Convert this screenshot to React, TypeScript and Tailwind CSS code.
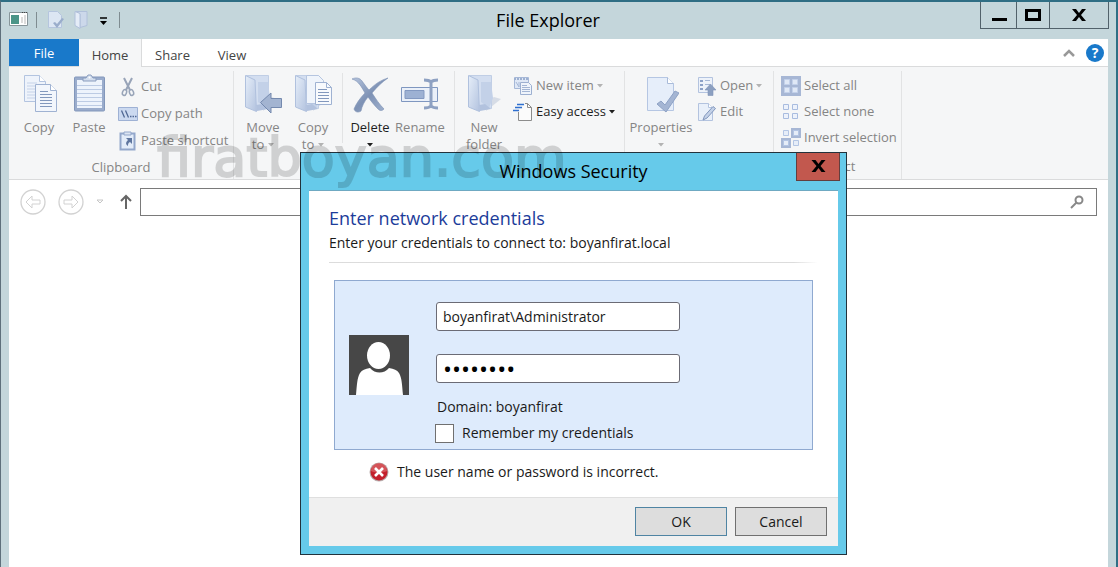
import { useState, type ReactNode } from "react";

function CopyIcon() {
  return (
    <svg width="36" height="40" viewBox="-2 0 36 40" fill="#eef3fb" stroke="#b3c4e0">
      <path d="M1.500 2.500h15l6 6v20h-21z" />
      <path d="M16.500 2.500v6h6" fill="#fff" />
      <path d="M4 10h10M4 13h8M4 16h8M4 19h8M4 22h8M4 25h8" stroke="#c5d2e8" />
      <path d="M12.500 11.500h15l6 6v21h-21z" fill="#f2f6fc" stroke="#9fb2d2" />
      <path d="M27.500 11.500v6h6" fill="#fff" stroke="#9fb2d2" />
      <path d="M17 18.500h8M17 21.500h12M17 24.500h12M17 27.500h12M17 30.500h12M17 33.500h12" stroke="#8298bd" />
    </svg>
  );
}

function PasteIcon() {
  return (
    <svg width="36" height="40" viewBox="-1 0 36 40">
      <rect x="2.500" y="4" width="30" height="34" rx="1" fill="#9aaccc" stroke="#8297bb" />
      <rect x="5" y="7" width="25" height="28" fill="#edf3fc" />
      <path d="M5 12.500h25M5 16.500h25M5 20.500h25M5 24.500h25M5 28.500h25M5 32.500h25" stroke="#bccbe4" />
      <path d="M11 8V5h3l2-3h3l2 3h3v3z" fill="#d3deee" stroke="#8a9dbe" />
      <circle cx="17.500" cy="4.500" r="1" fill="#fff" />
    </svg>
  );
}

function Folder() {
  return (
    <>
      <defs>
        <linearGradient id="folderFront" x1="0" x2="1" y1="0" y2="1">
          <stop offset="0" stopColor="#e6eef9" />
          <stop offset="1" stopColor="#b3c3df" />
        </linearGradient>
      </defs>
      <path d="M20 38l15-12-7-2-6 4z" fill="#c9d1de" opacity=".7" />
      <path d="M3 2.500h22.500v33L10 32V7z" fill="#d3def0" stroke="#c0cee5" />
      <path d="M15 9h10l2 16-4 10-8-6z" fill="#c3d1e8" />
      <path d="M2.500 2.500L12 7l1.500 31.500L2.500 34z" fill="url(#folderFront)" stroke="#b0c1de" />
      <path d="M13 32l6-1 6 5-11 2z" fill="#b2c2de" />
    </>
  );
}

function MoveToIcon() {
  return (
    <svg width="40" height="40" viewBox="0 0 40 40">
      <Folder />
      <path d="M17.500 29.500L28 20v5.500h10.500v9H28V40z" fill="#a3b4d1" stroke="#7489ae" />
    </svg>
  );
}

function CopyToIcon() {
  return (
    <svg width="40" height="40" viewBox="0 0 40 40">
      <Folder />
      <path d="M13.500 2.500h12l5 5v23h-17z" fill="#eff4fb" stroke="#b5c5e0" />
      <path d="M22.500 9.500h11l5 5v17h-16z" fill="#f8fafd" stroke="#9fb2d2" />
      <path d="M33.500 9.500v5h5" fill="none" stroke="#9fb2d2" />
      <path d="M25 16.500h9M25 19.500h11M25 22.500h11M25 25.500h11M25 28.500h11" stroke="#8298bd" />
    </svg>
  );
}

function DeleteIcon() {
  return (
    <svg width="40" height="40" viewBox="0 0 40 40">
      <defs>
        <linearGradient id="cross" x1="0" x2="1" y1="0" y2="1">
          <stop offset="0" stopColor="#b4c3dc" />
          <stop offset=".5" stopColor="#7e92b5" />
          <stop offset="1" stopColor="#a3b4d1" />
        </linearGradient>
      </defs>
      <path
        d="M2 6c4-2 8-1 10 2 3 4 5 7 7 9C25 11 31 7 38 5c-6 4-11 9-16 15 4 6 7 11 12 16-2 2-4 2-6 0-4-4-7-8-10-12-4 5-6 9-7 14-3 2-6 1-7-2 2-5 6-11 11-16C12 15 9 8 2 6z"
        fill="url(#cross)"
        stroke="#7c90b3"
        strokeWidth=".6"
      />
    </svg>
  );
}

function RenameIcon() {
  return (
    <svg width="40" height="40" viewBox="0 0 40 40" fill="none">
      <path d="M1.500 14.500h36v14h-36z" fill="#eaf0f9" stroke="#7f97c0" />
      <path d="M5 17.500h19v8H5z" fill="#9db1d3" stroke="#8399c1" />
      <path d="M24 7c4 0 6 1 7 2 1-1 3-2 7-2M24 35c4 0 6-1 7-2 1 1 3 2 7 2M31 9v24" stroke="#8ea1c2" strokeWidth="3" />
    </svg>
  );
}

function NewFolderIcon() {
  return (
    <svg width="36" height="40" viewBox="0 0 36 40">
      <Folder />
    </svg>
  );
}

function PropertiesIcon() {
  return (
    <svg width="36" height="40" viewBox="0 0 36 40">
      <path d="M4.500 4.500h20l6 6v27h-26z" fill="#e6eefa" stroke="#b5c6e3" />
      <path d="M24.500 4.500v6h6" fill="#fff" stroke="#a9bbd9" />
      <path d="M14 31l4-3 4 4 10-14 4 2-13 19z" fill="#a4b5d3" stroke="#8ea2c5" />
    </svg>
  );
}

function CutIcon() {
  return (
    <svg width="20" height="20" viewBox="0 0 20 20" fill="none" stroke="#98a4b8">
      <path d="M6 1l6 12M14 1L8 13" strokeWidth="2" />
      <ellipse cx="6.500" cy="15.500" rx="2" ry="3" strokeWidth="1.500" transform="rotate(20 6.500 15.500)" />
      <ellipse cx="13.500" cy="15.500" rx="2" ry="3" strokeWidth="1.500" transform="rotate(-20 13.500 15.500)" />
    </svg>
  );
}

function CopyPathIcon() {
  return (
    <svg width="20" height="20" viewBox="0 0 20 20">
      <path d="M.5 3.500h19v13H.5z" fill="#cbd9f0" stroke="#9eb1d4" />
      <path d="M3.500 6.500l3 7M7.500 6.500l3 7" stroke="#506894" strokeWidth="1.300" />
      <path d="M12 12.500h1.500M14.500 12.500H16M17 12.500h1.500" stroke="#506894" strokeWidth="1.500" />
    </svg>
  );
}

function PasteShortcutIcon() {
  return (
    <svg width="20" height="20" viewBox="0 0 20 20">
      <path d="M2.500 2.500h14v16h-14z" fill="#e3ecf9" stroke="#93a7cb" strokeWidth="2" />
      <path d="M6 1h7v3H6z" fill="#dbe4f2" stroke="#93a7cb" />
      <path d="M8 7h6v6l-2-2c-2 1-2 2-2 4-3-2-2-4 0-6z" fill="#5f769f" />
    </svg>
  );
}

function NewItemIcon() {
  return (
    <svg width="20" height="20" viewBox="0 0 20 20">
      <path d="M1.500 1.500h14v11h-14z" fill="#dfe8f6" stroke="#a6b8d7" />
      <path d="M1 3h14" stroke="#9db0d1" strokeWidth="2" strokeDasharray="2 1" />
      <path d="M3 6l3 5V6" fill="none" stroke="#a6b8d7" />
      <path d="M7.500 6.500h8l3 3v9h-11z" fill="#eff4fb" stroke="#9db0d1" />
      <path d="M9 9.500h5M9 11.500h8M9 13.500h8M9 15.500h8" stroke="#a3b5d4" />
    </svg>
  );
}

function EasyAccessIcon() {
  return (
    <svg width="20" height="20" viewBox="0 0 20 20">
      <path d="M5.500 1.500h9l4 4v13h-13z" fill="#fbfbfb" stroke="#8c8c8c" />
      <path d="M14.500 1.500v4h4" fill="none" stroke="#8c8c8c" />
      <path d="M3 2.500h9M1 5.500h9M0 8.500h7" stroke="#f5f6f7" strokeWidth="3" />
      <path d="M4 2.500h7M2 5.500h7M0 8.500h6" stroke="#2f6fd0" strokeWidth="1.500" />
    </svg>
  );
}

function OpenIcon() {
  return (
    <svg width="20" height="20" viewBox="0 0 20 20">
      <path d="M1.500 1.500h14v15h-14z" fill="#edf2fa" stroke="#b3c3df" />
      <path d="M3 4h3v2H3zM3 8h3v2H3zM3 12h3v2H3z" fill="#8da2c8" />
      <path d="M8 4.500h5M8 8.500h5" stroke="#a7b8d6" />
      <path d="M13.500 8L19 14h-3v5.500h-5V14H8z" fill="#8b9fc0" stroke="#7f94b8" strokeWidth=".6" />
    </svg>
  );
}

function EditIcon() {
  return (
    <svg width="20" height="20" viewBox="0 0 20 20">
      <path d="M1.500 1.500h10l4 4v13h-14z" fill="#e9f0fa" stroke="#b3c3df" />
      <path d="M11.500 1.500v4h4" fill="#fff" stroke="#b3c3df" />
      <path d="M6 18l1.500-4L16 4.500l2.500 2L10 16z" fill="#c3d1e8" stroke="#8297bd" />
    </svg>
  );
}

function SelectAllIcon() {
  return (
    <svg width="20" height="20" viewBox="0 0 20 20">
      <path d="M0 0h20v20H0z" fill="#a7b7d5" />
      <path d="M3.500 3.500h5v5h-5zM11.500 3.500h5v5h-5zM3.500 11.500h5v5h-5zM11.500 11.500h5v5h-5z" fill="#dfe8f6" stroke="#c3d1ea" />
    </svg>
  );
}

function SelectNoneIcon() {
  return (
    <svg width="20" height="20" viewBox="0 0 20 20">
      <path d="M2.500 2.500h5v5h-5zM11.500 2.500h5v5h-5zM2.500 11.500h5v5h-5zM11.500 11.500h5v5h-5z" fill="#edf2fb" stroke="#a9bcdf" />
    </svg>
  );
}

function InvertIcon() {
  return (
    <svg width="20" height="20" viewBox="0 0 20 20">
      <path d="M10 0h10v10H10zM0 10h10v10H0z" fill="#a7b7d5" />
      <path d="M2.500 2.500h5v5h-5zM12.500 2.500h5v5h-5zM2.500 12.500h5v5h-5zM12.500 12.500h5v5h-5z" fill="#e6edf8" stroke="#b3c5e4" />
    </svg>
  );
}

function Caret({ dark = false }: { dark?: boolean }) {
  return (
    <svg width="6" height="4" viewBox="0 0 6 4" className="shrink-0">
      <path d="M0 0h6L3 3.500z" fill={dark ? "#1e1e1e" : "#b3b3b3"} />
    </svg>
  );
}

function BigButton({
  icon,
  label,
  second,
  caret = false,
  active = false,
  wide = false,
}: {
  icon: ReactNode;
  label: string;
  second?: string;
  caret?: boolean;
  active?: boolean;
  wide?: boolean;
}) {
  return (
    <button
      type="button"
      className={`flex shrink-0 flex-col items-center text-[13px] leading-[17px] ${
        wide ? "w-16" : "w-[50px]"
      } ${active ? "text-[#1e1e1e]" : "text-[#858585]"}`}
    >
      {icon}
      <span className="mt-1.5">{label}</span>
      {second || caret ? (
        <span className="flex h-[17px] items-center gap-1">
          {second}
          {caret ? <Caret dark={active} /> : null}
        </span>
      ) : null}
    </button>
  );
}

function SmallButton({
  icon,
  label,
  caret = false,
  active = false,
}: {
  icon: ReactNode;
  label: string;
  caret?: boolean;
  active?: boolean;
}) {
  return (
    <button
      type="button"
      className={`flex h-[26px] items-center gap-[3px] text-[13px] whitespace-nowrap ${
        active ? "text-[#1e1e1e]" : "text-[#858585]"
      }`}
    >
      {icon}
      <span>{label}</span>
      {caret ? <Caret dark={active} /> : null}
    </button>
  );
}

function Group({
  width,
  title,
  children,
}: {
  width: string;
  title?: string;
  children: ReactNode;
}) {
  return (
    <div className={`flex shrink-0 flex-col border-r border-[#e2e3e4] ${width}`}>
      <div className="flex h-[89px] items-start pt-0.5 pl-1">{children}</div>
      {title ? (
        <div className="text-center text-[13px] leading-[26px] text-[#858585]">{title}</div>
      ) : null}
    </div>
  );
}

function Ribbon() {
  return (
    <div className="flex h-[113px] border-b border-[#dadbdc] bg-[#f5f6f7] pt-1">
      <Group width="w-[225px]" title="Clipboard">
        <div className="ml-px flex">
          <BigButton icon={<CopyIcon />} label="Copy" />
          <BigButton icon={<PasteIcon />} label="Paste" />
        </div>
        <div className="ml-1 flex flex-col gap-px pt-px">
          <SmallButton icon={<CutIcon />} label="Cut" />
          <SmallButton icon={<CopyPathIcon />} label="Copy path" />
          <SmallButton icon={<PasteShortcutIcon />} label="Paste shortcut" />
        </div>
      </Group>
      <Group width="w-[221px]">
        <BigButton icon={<MoveToIcon />} label="Move" second="to" caret />
        <BigButton icon={<CopyToIcon />} label="Copy" second="to" caret />
        <div className="mr-0.5 ml-1 h-[70px] w-px bg-[#e2e3e4]" />
        <BigButton icon={<DeleteIcon />} label="Delete" caret active />
        <BigButton icon={<RenameIcon />} label="Rename" />
      </Group>
      <Group width="w-[170px]">
        <BigButton icon={<NewFolderIcon />} label="New" second="folder" />
        <div className="ml-1 flex flex-col">
          <SmallButton icon={<NewItemIcon />} label="New item" caret />
          <SmallButton icon={<EasyAccessIcon />} label="Easy access" caret active />
        </div>
      </Group>
      <Group width="w-[149px]">
        <BigButton icon={<PropertiesIcon />} label="Properties" caret wide />
        <div className="ml-1 flex flex-col">
          <SmallButton icon={<OpenIcon />} label="Open" caret />
          <SmallButton icon={<EditIcon />} label="Edit" />
        </div>
      </Group>
      <Group width="w-32" title="Select">
        <div className="ml-[3px] flex flex-col">
          <SmallButton icon={<SelectAllIcon />} label="Select all" />
          <SmallButton icon={<SelectNoneIcon />} label="Select none" />
          <SmallButton icon={<InvertIcon />} label="Invert selection" />
        </div>
      </Group>
    </div>
  );
}

function TitleBar() {
  return (
    <header className="flex h-[37px] items-start">
      <div className="flex h-9 w-[110px] shrink-0 items-center">
        <svg width="106" height="22" viewBox="0 0 106 22">
          <path d="M.5 3.500h18v13H.5z" fill="#fff" stroke="#87959a" />
          <path d="M2 6h8v9H2z" fill="#4b9588" />
          <path d="M12 8h2v6h-2zM15 6h2v9h-2z" fill="#dcdcdc" />
          <path d="M13 3.500h1m1 0h1m1 0h1" stroke="#444" />
          <path d="M27.500 3v16" stroke="#7f8c91" />
          <path d="M39.500 2.500h9l4 4v12h-13z" fill="#dce6f3" stroke="#b5c5de" />
          <path d="M44 14l2-1 2 2 5-6 2 1-7 9z" fill="#9aadcb" />
          <path d="M67 2.500h11v14l-7 2V5z" fill="#ccd8ea" stroke="#b0c0da" />
          <path d="M66 2.500l5 2v15l-5-3z" fill="#e4ecf7" stroke="#b0c0da" />
          <path d="M91 9h7" stroke="#000" strokeWidth="1.500" />
          <path d="M91 12h7l-3.500 4z" />
        </svg>
      </div>
      <div className="mt-2.5 h-4 w-px shrink-0 bg-[#7f8c91]" />
      <h1 className="flex-1 pr-1 text-center text-lg leading-9 text-black">File Explorer</h1>
      <div className="flex h-[27px] shrink-0 border border-t-0 border-[#52626b]">
        <button type="button" aria-label="Minimize" className="w-9 border-r border-[#52626b]">
          <svg width="34" height="26" viewBox="0 0 34 26">
            <path d="M11 16h15v3H11z" />
          </svg>
        </button>
        <button type="button" aria-label="Maximize" className="w-[33px] border-r border-[#52626b]">
          <svg width="32" height="26" viewBox="0 0 32 26">
            <path d="M9.500 8.500h13v9h-13z" fill="none" stroke="#000" strokeWidth="3" />
          </svg>
        </button>
        <button type="button" aria-label="Close" className="w-[58px]">
          <svg width="58" height="26" viewBox="0 0 58 26">
            <path d="M22 7h4l3 4 3-4h4l-5 6 5 6h-4l-3-4-3 4h-4l5-6z" />
          </svg>
        </button>
      </div>
    </header>
  );
}

function AddressRow() {
  return (
    <div className="flex h-11 items-center pr-[11px] pl-[11px]">
      <button type="button" aria-label="Back" className="mr-3">
        <svg width="26" height="26" viewBox="0 0 26 26" fill="none" stroke="#d2d2d2">
          <circle cx="13" cy="13" r="12" strokeWidth="1.300" />
          <path d="M6 13l6-6v4h8v4h-8v4z" />
        </svg>
      </button>
      <button type="button" aria-label="Forward">
        <svg width="26" height="26" viewBox="0 0 26 26" fill="none" stroke="#d2d2d2">
          <circle cx="13" cy="13" r="12" strokeWidth="1.300" />
          <path d="M20 13l-6-6v4H6v4h8v4z" />
        </svg>
      </button>
      <button type="button" aria-label="Recent locations" className="ml-3">
        <svg width="8" height="6" viewBox="0 0 8 6" fill="none" stroke="#c6c6c6">
          <path d="M1 1h6L4 4z" />
        </svg>
      </button>
      <button type="button" aria-label="Up" className="mr-1.5 ml-3.5">
        <svg width="16" height="16" viewBox="0 0 16 16" fill="none" stroke="#666" strokeWidth="2">
          <path d="M8 15V2M3 7l5-5 5 5" />
        </svg>
      </button>
      <input
        aria-label="Address"
        className="h-7 flex-1 border border-[#7a7a7a] px-2 text-[13px] outline-none"
      />
      <div className="ml-3 flex h-7 w-[280px] items-center border border-[#7a7a7a] pr-3">
        <input aria-label="Search" className="h-full min-w-0 flex-1 px-2 text-[13px] outline-none" />
        <svg width="14" height="14" viewBox="0 0 14 14" fill="none" stroke="#888" strokeWidth="2">
          <circle cx="9" cy="5" r="3.500" />
          <path d="M6.500 7.500L1 13" />
        </svg>
      </div>
    </div>
  );
}

function SecurityDialog() {
  const [user, setUser] = useState("boyanfirat\\Administrator");
  const [password, setPassword] = useState("password");

  return (
    <section
      role="dialog"
      aria-labelledby="dialog-title"
      className="absolute top-[150px] left-[299px] w-[547px] border border-[#22323c] bg-[#66caea] px-2 pb-2 text-sm text-[#1a1a1a]"
    >
      <div className="relative h-[37px]">
        <h2 id="dialog-title" className="text-center text-lg leading-[37px] text-black">
          Windows Security
        </h2>
        <button
          type="button"
          aria-label="Close dialog"
          className="absolute top-0 -right-0.5 h-7 w-11 border border-t-0 border-[#633e3e] bg-[#c2584e]"
        >
          <svg width="42" height="27" viewBox="0 0 42 27">
            <path d="M14.500 7h4l3 4 3-4h4l-5 6 5 6h-4l-3-4-3 4h-4l5-6z" />
          </svg>
        </button>
      </div>

      <div className="border-t border-[#6fa9c2] bg-white px-5 pt-[13px] pb-3.5">
        <h3 className="text-lg leading-7 text-[#1c3c9a]">Enter network credentials</h3>
        <p className="leading-[22px]">Enter your credentials to connect to: boyanfirat.local</p>
        <div className="mt-2 h-px bg-linear-to-r from-[#dcdcdc] from-95% to-white" />
        <div className="mt-[17px] mr-[5px] ml-[5px] flex items-center border border-[#8fa9d0] bg-[#deebfc] pl-3.5">
          <svg width="60" height="60" viewBox="0 0 60 60" className="shrink-0">
            <path d="M0 0h60v60H0z" fill="#474747" />
            <ellipse cx="29.500" cy="20.500" rx="11.500" ry="13.500" fill="#fff" />
            <path d="M7 60c1-10 1-17 4-22 2-3 5-4 10-5 5 6 14 6 19 0 5 1 8 2 10 5 3 5 3 12 4 22z" fill="#fff" />
          </svg>
          <div className="ml-[26px] flex flex-col pt-[21px] pb-1.5">
            <input
              aria-label="User name"
              value={user}
              onChange={(e) => setUser(e.target.value)}
              className="ml-px h-[29px] w-[244px] rounded-[3px] border border-[#6b6b75] bg-white px-1.5 outline-none"
            />
            <input
              type="password"
              aria-label="Password"
              value={password}
              onChange={(e) => setPassword(e.target.value)}
              className="mt-[23px] ml-px h-[29px] w-[244px] rounded-[3px] border border-[#6b6b75] bg-white px-1.5 text-2xl text-black outline-none"
            />
            <p className="mt-3.5 ml-0.5 leading-5">Domain: boyanfirat</p>
            <label className="mt-1.5 flex items-center leading-5">
              <input
                type="checkbox"
                className="mr-2 size-[19px] appearance-none border border-[#707070] bg-white checked:bg-[#1979ca]"
              />
              Remember my credentials
            </label>
          </div>
        </div>
        <div className="mt-[11px] ml-10 flex h-[22px] items-center gap-2">
          <svg width="20" height="20" viewBox="0 0 20 20">
            <circle cx="10" cy="10" r="9.500" fill="#b7a9a9" />
            <circle cx="10" cy="10" r="8.500" fill="#c3202c" />
            <path d="M2 9a8 8 0 0 1 16 0c-5 2-11 2-16 0z" fill="#dc6a6c" opacity=".7" />
            <path d="M6 6l8 8M14 6l-8 8" stroke="#fff" strokeWidth="2.600" />
          </svg>
          <p role="alert">The user name or password is incorrect.</p>
        </div>
      </div>

      <div className="flex justify-end gap-2 border-t border-[#dfdfdf] bg-[#f0f0f0] px-[11px] pt-[9px] pb-2.5">
        <button type="button" className="h-[29px] w-[92px] border border-[#4f84a3] bg-[#dddddd]">
          OK
        </button>
        <button type="button" className="h-[29px] w-[92px] border border-[#707070] bg-[#dddddd]">
          Cancel
        </button>
      </div>
    </section>
  );
}

export default function App() {
  return (
    <div className="relative flex min-h-screen flex-col overflow-hidden border-t-2 border-r-2 border-l border-t-[#2f6e84] border-r-[#2f6e84] border-l-[#5f707c] bg-[#c4d6db] pr-[7px] pl-2 font-['Open_Sans',sans-serif]">
      <TitleBar />
      <main className="mr-px flex flex-1 flex-col bg-white">
        <nav className="flex h-7 items-stretch border-b border-[#dadbdc] text-[13px] text-[#444]">
          <button type="button" className="w-[70px] bg-[#1979ca] pt-0.5 text-white">
            File
          </button>
          <button
            type="button"
            className="-mb-px w-[63px] border-r border-[#dadbdc] bg-[#f5f6f7] pt-1.5"
          >
            Home
          </button>
          <button type="button" className="w-[61px] pt-1.5">
            Share
          </button>
          <button type="button" className="w-[58px] pt-1.5">
            View
          </button>
          <div className="ml-auto flex items-center gap-2.5 pr-1">
            <button type="button" aria-label="Minimize the ribbon">
              <svg width="14" height="10" viewBox="0 0 14 10" fill="none" stroke="#999" strokeWidth="2.500">
                <path d="M2 8l5-5 5 5" />
              </svg>
            </button>
            <button
              type="button"
              aria-label="Help"
              className="size-[18px] rounded-full bg-[#1979ca] text-sm leading-[18px] font-bold text-white"
            >
              ?
            </button>
          </div>
        </nav>
        <Ribbon />
        <AddressRow />
      </main>
      <SecurityDialog />
      <div className="pointer-events-none absolute top-[120px] left-[156px] font-['DejaVu_Sans',sans-serif] text-[54px] leading-[72px] text-black opacity-15 [-webkit-text-stroke:2px_black]">
        firatboyan.com
      </div>
    </div>
  );
}
